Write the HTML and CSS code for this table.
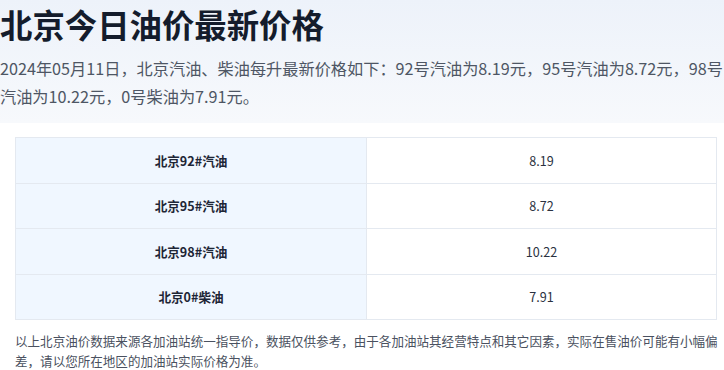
FILE: index.html
```html
<!DOCTYPE html>
<html lang="zh-CN">
<head>
<meta charset="utf-8">
<title>北京今日油价最新价格</title>
<link rel="stylesheet" href="styles.css">
</head>
<body>
<header class="hero">
  <h1 class="title">北京今日油价最新价格</h1>
  <p class="summary">2024年05月11日，北京汽油、柴油每升最新价格如下：92号汽油为8.19元，95号汽油为8.72元，98号汽油为10.22元，0号柴油为7.91元。</p>
</header>
<section class="card">
  <table class="prices">
    <tbody>
      <tr><th>北京92#汽油</th><td>8.19</td></tr>
      <tr><th>北京95#汽油</th><td>8.72</td></tr>
      <tr><th>北京98#汽油</th><td>10.22</td></tr>
      <tr><th>北京0#柴油</th><td>7.91</td></tr>
    </tbody>
  </table>
  <p class="note">以上北京油价数据来源各加油站统一指导价，数据仅供参考，由于各加油站其经营特点和其它因素，实际在售油价可能有小幅偏差，请以您所在地区的加油站实际价格为准。</p>
</section>
</body>
</html>
```
FILE: styles.css
```css
html, body {
  margin: 0;
  padding: 0;
  background: #ffffff;
}
body {
  font-family: "Noto Sans CJK SC", "Noto Sans", sans-serif;
  overflow: hidden;
}
.hero {
  background: linear-gradient(180deg, #edf2fa 0%, #f7f9fc 100%);
  padding: 0 0 13px 0;
}
.title {
  margin: 0;
  font-size: 32.4px;
  line-height: 48px;
  font-weight: 700;
  color: #141c2c;
}
.summary {
  margin: 6px 0 0 0;
  font-size: 16.2px;
  line-height: 28px;
  color: #4e5664;
}
.card {
  background: #ffffff;
  border-radius: 6px 0 0 0;
  padding: 14px 0 0 15px;
}
.prices {
  width: 702px;
  border-collapse: collapse;
  table-layout: fixed;
}
.prices th,
.prices td {
  border: 1px solid #e4e9f0;
  height: 44.5px;
  padding: 0;
  text-align: center;
  font-size: 12.6px;
  color: #2a3140;
}
.prices th {
  width: 350px;
  background: #f0f7ff;
  font-weight: 700;
  color: #1e2636;
}
.prices td {
  font-weight: 400;
  background: #ffffff;
}
.note {
  margin: 11px 0 0 0;
  font-size: 12.55px;
  line-height: 20px;
  color: #4a5160;
}
```
